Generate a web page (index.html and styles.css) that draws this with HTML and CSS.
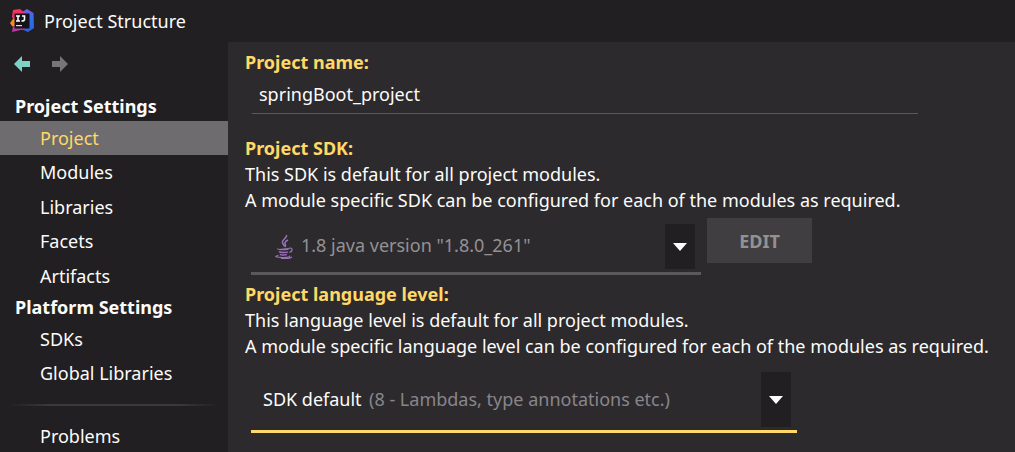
FILE: index.html
```html
<!DOCTYPE html>
<html lang="en">
<head>
<meta charset="utf-8">
<title>Project Structure</title>
<link rel="stylesheet" href="styles.css">
</head>
<body>
<header class="titlebar">
  <svg class="logo" viewBox="0 0 24 24" aria-hidden="true">
    <defs>
      <linearGradient id="blue" x1="0" y1="0" x2="0" y2="1"><stop offset="0" stop-color="#7a5be0"/><stop offset=".4" stop-color="#2f6fee"/><stop offset="1" stop-color="#2b62e0"/></linearGradient>
      <linearGradient id="pink" x1="0" y1="0" x2="1" y2="1"><stop offset="0" stop-color="#ff3558"/><stop offset="1" stop-color="#e8247c"/></linearGradient>
    </defs>
    <path fill="url(#blue)" d="M12 3 17 0l6.500 4L24 19l-6 4-7-3z"/>
    <path fill="url(#pink)" d="M3 1 10 0l5 4-1 6-9 3-3-5z"/>
    <path fill="#f98a28" d="M3 10 0 14l2 3 4 2V9z"/>
    <path fill="#b73ba8" d="M3 17h12v3L2 23z"/>
    <path fill="#151318" d="M4.500 4.500h15v15h-15z"/>
    <path fill="none" stroke="#fff" stroke-width="1.600" d="M6 7h4M8 7v5M6 12h4M12 7h2.500v3.500q0 1.500-3 1.500"/>
    <path fill="#ddd" d="M6 16h6v1.200H6z"/>
  </svg>
  <h1 class="title">Project Structure</h1>
</header>
<div class="body">
  <nav class="sidebar" aria-label="Settings sections">
    <div class="history">
      <button class="nav-button back" type="button" aria-label="Back"><svg class="arrow" viewBox="0 0 16 16" aria-hidden="true"><path fill="currentColor" d="M0 8 8 0v5h8v6H8v5z"/></svg></button>
      <button class="nav-button" type="button" aria-label="Forward" disabled><svg class="arrow" viewBox="0 0 16 16" aria-hidden="true"><path fill="currentColor" d="M16 8 8 0v5H0v6h8v5z"/></svg></button>
    </div>
    <h2 class="group">Project Settings</h2>
    <ul class="list list-project">
      <li class="entry"><a class="link selected" href="#project" aria-current="page">Project</a></li>
      <li class="entry"><a class="link" href="#modules">Modules</a></li>
      <li class="entry"><a class="link" href="#libraries">Libraries</a></li>
      <li class="entry"><a class="link" href="#facets">Facets</a></li>
      <li class="entry"><a class="link" href="#artifacts">Artifacts</a></li>
    </ul>
    <h2 class="group">Platform Settings</h2>
    <ul class="list">
      <li class="entry"><a class="link" href="#sdks">SDKs</a></li>
      <li class="entry"><a class="link" href="#global">Global Libraries</a></li>
    </ul>
    <hr class="divider">
    <ul class="list">
      <li class="entry"><a class="link" href="#problems">Problems</a></li>
    </ul>
  </nav>
  <main class="content" id="project">
    <section class="section">
      <label class="label" for="name">Project name:</label>
      <input class="name" id="name" type="text" value="springBoot_project" spellcheck="false">
    </section>
    <section class="section section-sdk">
      <label class="label" for="sdk">Project SDK:</label>
      <p class="text">This SDK is default for all project modules.<br>A module specific SDK can be configured for each of the modules as required.</p>
      <div class="row">
        <div class="combo combo-sdk">
          <select class="select" id="sdk"><option>1.8 java version "1.8.0_261"</option></select>
          <svg class="java" viewBox="0 0 18 24" fill="none" stroke="#9a72b8" aria-hidden="true">
            <path stroke-width="1.500" d="M11.500 0c.8 3-5 5-4 7.500.3 1.500 1.700 2.500 1.700 4M13 5c-2 1-3.500 2-3 3.500s1 2 0 3.500"/>
            <path stroke-width="1.500" d="M3 13.500c-1 1.300 10 1.300 11 0M4 16.500c1 1.300 7 1.300 9 .3M5 19.200c1 1 5 1 7 .2"/>
            <path stroke-width="1.200" d="M14 13.300c4-1.300 4 3 .5 4M3.500 20.500c-5 .8-3 2 5 2 5 0 7-.8 6-1.800M6 23.600c5 .3 9-.2 11-1.600"/>
          </svg>
          <span class="drop"><svg class="caret" viewBox="0 0 14 8" aria-hidden="true"><path fill="#fff" d="M0 0h14L7 8z"/></svg></span>
        </div>
        <button class="edit" type="button" disabled>EDIT</button>
      </div>
    </section>
    <section class="section section-level">
      <label class="label" for="level">Project language level:</label>
      <p class="text">This language level is default for all project modules.<br>A module specific language level can be configured for each of the modules as required.</p>
      <div class="combo combo-level">
        <select class="select" id="level"><option>SDK default</option></select>
        <span class="hint">(8 - Lambdas, type annotations etc.)</span>
        <span class="drop"><svg class="caret" viewBox="0 0 14 8" aria-hidden="true"><path fill="#fff" d="M0 0h14L7 8z"/></svg></span>
      </div>
    </section>
  </main>
</div>
</body>
</html>
```
FILE: styles.css
```css
* { box-sizing: border-box; }

body {
  margin: 0;
  min-height: 100vh;
  display: flex;
  flex-direction: column;
  background: #221f22;
  color: #fcfcfa;
  font: 18px/26px "Noto Sans", "Open Sans", sans-serif;
}

h1, h2, p, ul { margin: 0; padding: 0; font-size: inherit; }
ul { list-style: none; }
button, input, select { font: inherit; color: inherit; border: 0; border-radius: 0; padding: 0; background: none; }

.titlebar { display: flex; align-items: center; gap: 10px; height: 42px; padding-left: 10px; }
.logo { width: 24px; height: 24px; }
.title { font-weight: 400; }

.body { flex: 1; display: flex; }

.sidebar { flex: 0 0 228px; display: flex; flex-direction: column; }
.history { display: flex; gap: 22px; padding: 14px 14px 20px; }
.nav-button { display: flex; color: #777577; }
.back { color: #7fd0c5; }
.arrow { width: 16px; height: 16px; }
.group { padding-left: 15px; line-height: 29px; font-weight: 700; }
.list { display: flex; flex-direction: column; }
.list-project { height: 172px; }
.entry { flex: 1 0 auto; display: flex; }
.link { flex: 1; padding-left: 40px; line-height: 34px; color: inherit; text-decoration: none; }
.selected { background: #6e6c6f; color: #ffd866; }
.divider {
  width: 212px;
  height: 2px;
  margin: 14px 8px 13px;
  border: 0;
  background: linear-gradient(90deg, #221f22, #3b393c 20%, #3b393c 80%, #221f22);
}

.content { flex: 1; min-width: 0; padding: 7px 8px 16px 17px; background: #2d2a2e; }
.section { display: flex; flex-direction: column; margin-bottom: 21px; }
.label { color: #ffd866; font-weight: 700; }
.name { height: 39px; margin: 0 89px 0 7px; padding: 0 7px; border-bottom: 1px solid #5b595c; outline: 0; }
.row { display: flex; align-items: flex-start; gap: 6px; margin-top: 5px; }

.combo { position: relative; }
.select { appearance: none; width: 100%; height: 100%; outline: 0; }
.combo-sdk { width: 450px; height: 57px; margin-left: 6px; border-bottom: 3px solid #5b595c; color: #939293; }
.combo-sdk .select { padding-left: 50px; }
.java { position: absolute; left: 24px; top: 17px; width: 18px; height: 24px; }
.combo-level { width: 546px; height: 65px; margin: 9px 6px 0; border-bottom: 3px solid #ffd866; }
.combo-level .select { padding-left: 12px; }
.hint { position: absolute; left: 118px; top: 18px; color: #88868a; pointer-events: none; }
.drop {
  position: absolute;
  right: 6px;
  top: 6px;
  bottom: 3px;
  width: 30px;
  display: flex;
  align-items: center;
  justify-content: center;
  background: #221f22;
  pointer-events: none;
}
.combo-level .drop { top: 4px; }
.caret { width: 14px; height: 8px; }
.edit { width: 105px; height: 45px; background: #403e41; color: #939293; font-weight: 700; }
.section-sdk { margin-bottom: 6px; }
.section-level { margin: 0; }
```
